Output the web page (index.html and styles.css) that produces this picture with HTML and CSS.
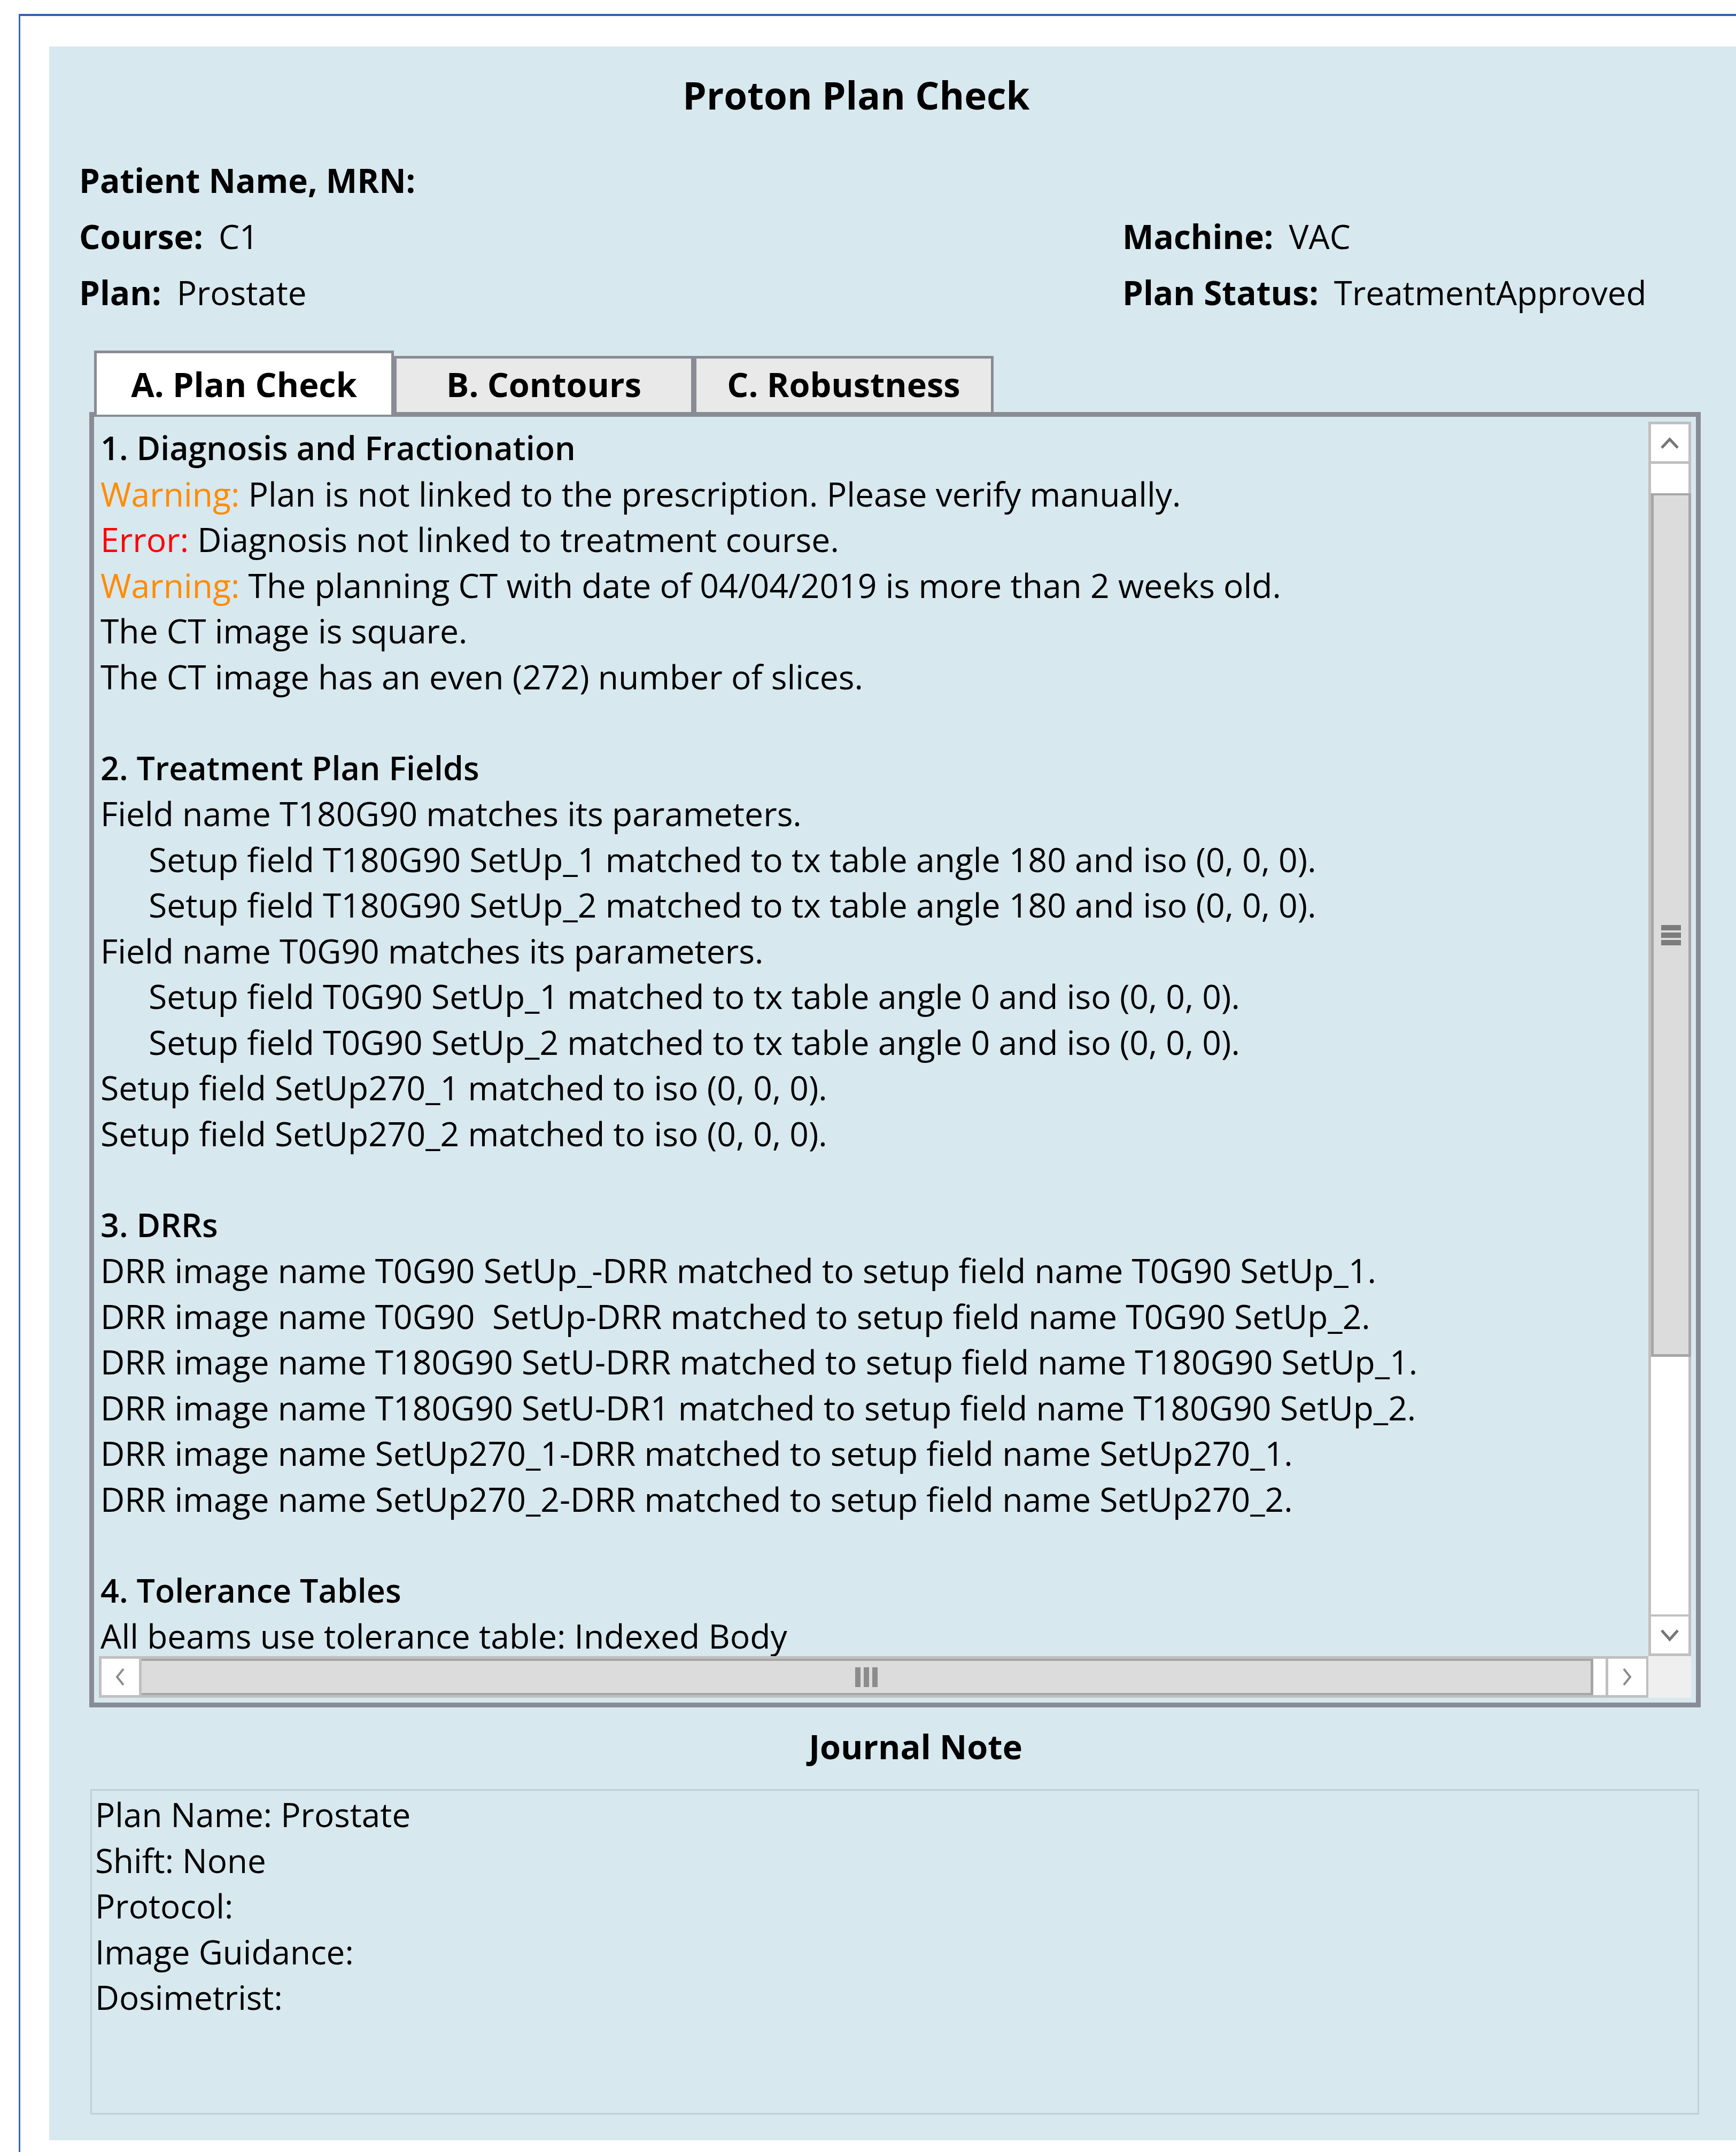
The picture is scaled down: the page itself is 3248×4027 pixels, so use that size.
FILE: index.html
```html
<!DOCTYPE html>
<html lang="en">
<head>
<meta charset="utf-8">
<title>Proton Plan Check</title>
<link rel="stylesheet" href="styles.css">
</head>
<body>
<div class="window">
  <div class="panel">
    <h1 class="title">Proton Plan Check</h1>

    <div class="info">
      <div class="field"><span class="label">Patient Name, MRN:</span></div>
      <div class="field"></div>
      <div class="field"><span class="label">Course:</span><span class="value">C1</span></div>
      <div class="field"><span class="label">Machine:</span><span class="value">VAC</span></div>
      <div class="field"><span class="label">Plan:</span><span class="value">Prostate</span></div>
      <div class="field"><span class="label">Plan Status:</span><span class="value">TreatmentApproved</span></div>
    </div>

    <div class="tabcontrol">
      <div class="tabstrip">
        <div class="tab active">A. Plan Check</div>
        <div class="tab">B. Contours</div>
        <div class="tab">C. Robustness</div>
      </div>
      <div class="tabpanel">
        <div class="scroller">
          <div class="viewport">
            <div class="line h">1. Diagnosis and Fractionation</div>
            <div class="line"><span class="warn">Warning:</span> Plan is not linked to the prescription. Please verify manually.</div>
            <div class="line"><span class="err">Error:</span> Diagnosis not linked to treatment course.</div>
            <div class="line"><span class="warn">Warning:</span> The planning CT with date of 04/04/2019 is more than 2 weeks old.</div>
            <div class="line">The CT image is square.</div>
            <div class="line">The CT image has an even (272) number of slices.</div>
            <div class="line blank"></div>
            <div class="line h">2. Treatment Plan Fields</div>
            <div class="line">Field name T180G90 matches its parameters.</div>
            <div class="line ind">Setup field T180G90 SetUp_1 matched to tx table angle 180 and iso (0, 0, 0).</div>
            <div class="line ind">Setup field T180G90 SetUp_2 matched to tx table angle 180 and iso (0, 0, 0).</div>
            <div class="line">Field name T0G90 matches its parameters.</div>
            <div class="line ind">Setup field T0G90 SetUp_1 matched to tx table angle 0 and iso (0, 0, 0).</div>
            <div class="line ind">Setup field T0G90 SetUp_2 matched to tx table angle 0 and iso (0, 0, 0).</div>
            <div class="line">Setup field SetUp270_1 matched to iso (0, 0, 0).</div>
            <div class="line">Setup field SetUp270_2 matched to iso (0, 0, 0).</div>
            <div class="line blank"></div>
            <div class="line h">3. DRRs</div>
            <div class="line">DRR image name T0G90 SetUp_-DRR matched to setup field name T0G90 SetUp_1.</div>
            <div class="line">DRR image name T0G90  SetUp-DRR matched to setup field name T0G90 SetUp_2.</div>
            <div class="line">DRR image name T180G90 SetU-DRR matched to setup field name T180G90 SetUp_1.</div>
            <div class="line">DRR image name T180G90 SetU-DR1 matched to setup field name T180G90 SetUp_2.</div>
            <div class="line">DRR image name SetUp270_1-DRR matched to setup field name SetUp270_1.</div>
            <div class="line">DRR image name SetUp270_2-DRR matched to setup field name SetUp270_2.</div>
            <div class="line blank"></div>
            <div class="line h">4. Tolerance Tables</div>
            <div class="line last">All beams use tolerance table: Indexed Body</div>
          </div>

          <div class="vscroll">
            <div class="vbtn up">
              <svg width="34" height="26" viewBox="0 0 34 26"><polyline points="2,22 17,6 32,22" fill="none" stroke="#767676" stroke-width="5"/></svg>
            </div>
            <div class="vtrack-top"></div>
            <div class="vthumb">
              <div class="vgrip"><span></span><span></span><span></span></div>
            </div>
            <div class="vtrack-bottom"></div>
            <div class="vbtn down">
              <svg width="34" height="28" viewBox="0 0 34 28"><polyline points="2,5 17,22 32,5" fill="none" stroke="#767676" stroke-width="5"/></svg>
            </div>
          </div>

          <div class="hscroll">
            <div class="hbtn left">
              <svg width="24" height="34" viewBox="0 0 24 34"><polyline points="18,2 6,17 18,32" fill="none" stroke="#8c8c8c" stroke-width="4"/></svg>
            </div>
            <div class="hthumb">
              <div class="hgrip"><span></span><span></span><span></span></div>
            </div>
            <div class="htrack-end"></div>
            <div class="hbtn right">
              <svg width="24" height="34" viewBox="0 0 24 34"><polyline points="6,2 18,17 6,32" fill="none" stroke="#8c8c8c" stroke-width="4"/></svg>
            </div>
          </div>

          <div class="corner"></div>
        </div>
      </div>
    </div>

    <h2 class="journal-title">Journal Note</h2>
    <div class="journal">
      <div class="line">Plan Name: Prostate</div>
      <div class="line">Shift: None</div>
      <div class="line">Protocol:</div>
      <div class="line">Image Guidance:</div>
      <div class="line">Dosimetrist:</div>
    </div>
  </div>
</div>
</body>
</html>
```
FILE: styles.css
```css
html, body {
  margin: 0;
  padding: 0;
  background: #ffffff;
  overflow: hidden;
}

body {
  width: 3248px;
  height: 4027px;
  font-family: "Open Sans", "Noto Sans", "DejaVu Sans", sans-serif;
  color: #000000;
}

/* window frame with the blue title edge */
.window {
  box-sizing: border-box;
  height: 4001px;
  margin: 26px 0 0 35px;
  border-top: 4px solid #3163ad;
  border-left: 3px solid #3a68b0;
  padding: 57px 0 0 54px;
}

.panel {
  box-sizing: border-box;
  height: 3918px;
  background: #d8e8ef;
  padding-top: 41px;
}

.title {
  margin: 0;
  width: 3020px;
  text-align: center;
  font-size: 71px;
  font-weight: 700;
  line-height: 100px;
}

/* patient / plan header */
.info {
  display: grid;
  grid-template-columns: 1952px auto;
  grid-auto-rows: 105px;
  margin: 57px 0 0 56px;
  font-size: 62px;
  line-height: 105px;
  white-space: nowrap;
}

.label {
  font-weight: 700;
}

.value {
  margin-left: 29px;
  font-size: 62px;
  font-weight: 400;
}

/* tab control */
.tabcontrol {
  width: 3015px;
  margin: 56px 0 0 75px;
}

.tabstrip {
  display: flex;
  align-items: flex-end;
  height: 115px;
  padding-left: 9px;
}

.tab {
  box-sizing: border-box;
  width: 561px;
  height: 105px;
  border: 5px solid #8a8c95;
  border-bottom: none;
  background: #e9e9e9;
  padding-top: 5px;
  text-align: center;
  font-size: 63px;
  font-weight: 700;
  line-height: 86px;
  white-space: nowrap;
}

.tab.active {
  position: relative;
  z-index: 1;
  height: 120px;
  margin-bottom: -5px;
  padding-top: 15px;
  background: #ffffff;
}

.tabpanel {
  box-sizing: border-box;
  height: 2424px;
  border: 9px solid #8a8c95;
  padding: 9px;
}

.scroller {
  display: grid;
  grid-template-columns: 1fr 80px;
  grid-template-rows: 1fr 78px;
  height: 100%;
}

.viewport {
  min-width: 0;
  padding: 6px 0 0 3px;
  font-size: 62.4px;
  line-height: 85.5px;
}

.line {
  height: 85.5px;
  white-space: pre;
}

/* the last row sits right on the horizontal scrollbar */
.line.last {
  height: 80px;
}

.line.h {
  font-size: 61px;
  font-weight: 600;
}

.line.ind {
  padding-left: 90px;
}

.warn {
  color: #ff8c00;
}

.err {
  color: #ff0000;
}

/* vertical scrollbar */
.vscroll {
  box-sizing: border-box;
  display: flex;
  flex-direction: column;
  border: 5px solid #c0c0c0;
  background: #ffffff;
}

.vbtn {
  display: flex;
  align-items: center;
  justify-content: center;
  height: 69px;
  flex: none;
}

.vbtn.up {
  border-bottom: 5px solid #c0c0c0;
}

.vbtn.down {
  border-top: 4px solid #c0c0c0;
}

.vtrack-top {
  height: 55px;
  flex: none;
}

.vthumb {
  box-sizing: border-box;
  flex: none;
  height: 1616px;
  margin-right: -5px;
  border: 5px solid #a6a6a6;
  border-top-width: 4px;
  background: #dcdcdc;
  display: flex;
  align-items: center;
  justify-content: center;
}

.vgrip {
  display: flex;
  flex-direction: column;
  gap: 4px;
  margin-top: 38px;
}

.vgrip span {
  display: block;
  width: 37px;
  height: 10px;
  background: #7c7c7c;
}

.vtrack-bottom {
  flex: 1;
}

/* horizontal scrollbar */
.hscroll {
  box-sizing: border-box;
  display: flex;
  border: 5px solid #c0c0c0;
  border-right-width: 4px;
  background: #ffffff;
}

.hbtn {
  display: flex;
  align-items: center;
  justify-content: center;
  width: 70px;
  flex: none;
}

.hbtn.left {
  border-right: 5px solid #c0c0c0;
}

.hbtn.right {
  border-left: 5px solid #c0c0c0;
}

.hthumb {
  box-sizing: border-box;
  width: 2716px;
  flex: none;
  border: 4px solid #a6a6a6;
  border-right-width: 5px;
  border-left-width: 0;
  background: #dcdcdc;
  display: flex;
  align-items: center;
  justify-content: center;
}

.hgrip {
  display: flex;
  gap: 6px;
}

.hgrip span {
  display: block;
  width: 10px;
  height: 37px;
  background: #8c8c8c;
}

.htrack-end {
  width: 23px;
  flex: none;
}

.corner {
  background: #efefef;
}

/* journal note */
.journal-title {
  margin: 30px 0 0;
  padding-left: 86px;
  text-align: center;
  font-size: 63px;
  font-weight: 700;
  line-height: 86px;
}

.journal {
  box-sizing: border-box;
  width: 3010px;
  height: 609px;
  margin: 37px 0 0 77px;
  border: 3px solid #bfd0d9;
  padding: 2px 0 0 6px;
  font-size: 62px;
  line-height: 85.5px;
}
```
